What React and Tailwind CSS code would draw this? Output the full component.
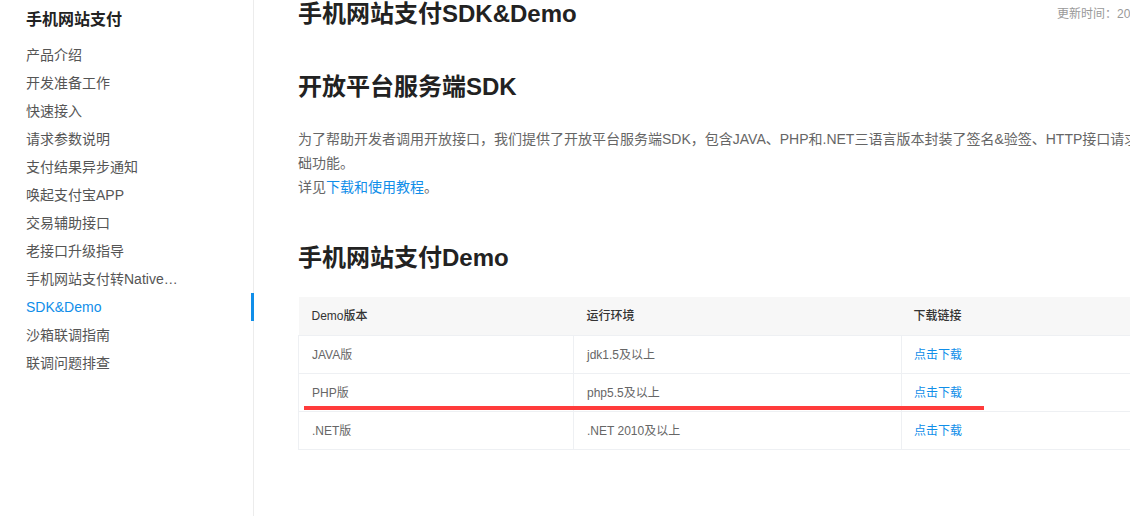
import React from "react";

const navItems = [
  "产品介绍",
  "开发准备工作",
  "快速接入",
  "请求参数说明",
  "支付结果异步通知",
  "唤起支付宝APP",
  "交易辅助接口",
  "老接口升级指导",
  "手机网站支付转Native…",
  "SDK&Demo",
  "沙箱联调指南",
  "联调问题排查",
];

const rows = [
  { name: "JAVA版", env: "jdk1.5及以上" },
  { name: "PHP版", env: "php5.5及以上" },
  { name: ".NET版", env: ".NET 2010及以上" },
];

const font = { fontFamily: '"Liberation Sans", "Noto Sans CJK SC", sans-serif' };

export default function App() {
  return (
    <div
      className="relative flex w-[1130px] h-[516px] overflow-hidden bg-white"
      style={font}
    >
      {/* sidebar */}
      <aside className="w-[254px] shrink-0 border-r border-[#ececec] pt-[6px]">
        <h3 className="pl-[26px] text-[16px] leading-[28px] font-bold text-[#222]">
          手机网站支付
        </h3>
        <ul className="mt-[7px]">
          {navItems.map((item) => {
            const active = item === "SDK&Demo";
            return (
              <li
                key={item}
                className={`relative pl-[26px] text-[14px] leading-[28px] ${
                  active ? "text-[#108ee9]" : "text-[#555]"
                }`}
              >
                {item}
                {active && (
                  <span className="absolute right-[-1px] top-0 h-[28px] w-[3px] bg-[#108ee9]" />
                )}
              </li>
            );
          })}
        </ul>
      </aside>

      {/* main */}
      <main className="relative shrink-0 pl-[44px]">
        <div className="w-[876px]">
          <h1 className="text-[24px] leading-[28px] font-bold text-[#222]">
            手机网站支付SDK&Demo
          </h1>

          <h2 className="mt-[43px] text-[24px] leading-[32px] font-bold text-[#222]">
            开放平台服务端SDK
          </h2>
          <p className="mt-[24px] text-[14px] leading-[24px] text-[#666]">
            为了帮助开发者调用开放接口，我们提供了开放平台服务端SDK，包含JAVA、PHP和.NET三语言版本封装了签名&验签、HTTP接口请求等基础功能。
          </p>
          <p className="text-[14px] leading-[24px] text-[#666]">
            详见<a className="text-[#108ee9]">下载和使用教程</a>。
          </p>

          <h2 className="mt-[43px] text-[24px] leading-[32px] font-bold text-[#222]">
            手机网站支付Demo
          </h2>

          <table className="mt-[23px] w-full border-collapse text-[12px]">
            <thead>
              <tr className="h-[38px] bg-[#f7f7f7] text-left text-[#333]">
                <th className="w-[275px] pl-[13px] font-medium">Demo版本</th>
                <th className="w-[328px] pl-[13px] font-medium">运行环境</th>
                <th className="pl-[12px] font-medium">下载链接</th>
              </tr>
            </thead>
            <tbody>
              {rows.map((r) => (
                <tr key={r.name} className="h-[38px] text-[#666]">
                  <td className="border border-[#eef0f3] pl-[13px] pt-[2px]">{r.name}</td>
                  <td className="border border-[#eef0f3] pl-[13px] pt-[2px]">{r.env}</td>
                  <td className="border border-[#eef0f3] pl-[12px] pt-[2px]">
                    <a className="text-[#108ee9]">点击下载</a>
                  </td>
                </tr>
              ))}
            </tbody>
          </table>
        </div>
      </main>

      {/* update time, clipped at the right edge */}
      <span className="absolute left-[1057px] top-[6px] whitespace-nowrap text-[12px] leading-[16px] text-[#999]">
        更新时间：2019-01-01
      </span>

      {/* red annotation underline */}
      <span className="absolute left-[304px] top-[406px] h-[4px] w-[680px] bg-[#ff3b3b]" />
    </div>
  );
}
